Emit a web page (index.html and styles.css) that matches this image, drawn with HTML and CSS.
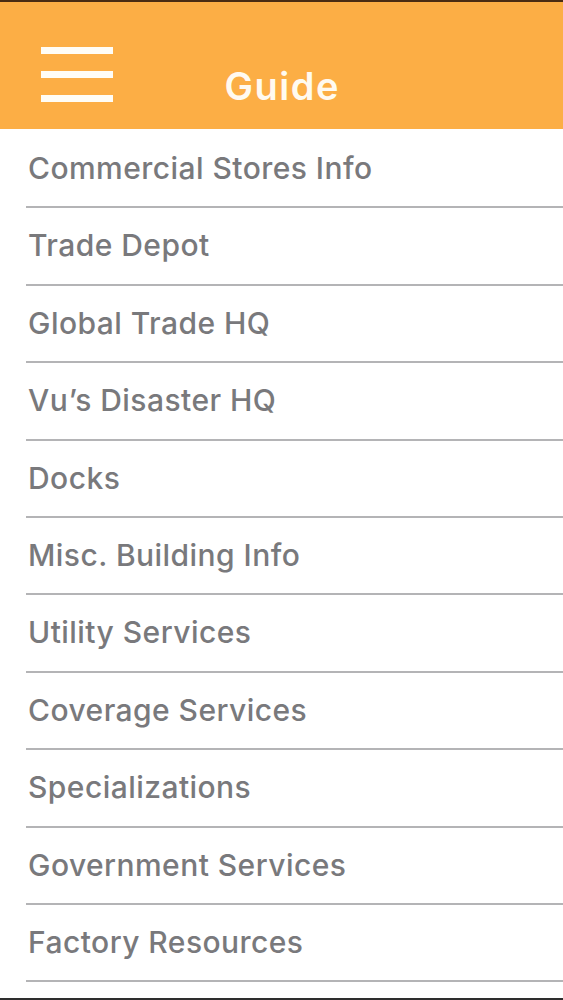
FILE: index.html
```html
<!DOCTYPE html>
<html lang="en">
<head>
<meta charset="utf-8">
<title>Guide</title>
<link rel="stylesheet" href="styles.css">
</head>
<body>
<div class="screen">
  <header class="topbar">
    <div class="menu-cell">
      <div class="hamburger" aria-label="Menu">
        <span class="bar"></span>
        <span class="bar"></span>
        <span class="bar"></span>
      </div>
    </div>
    <h1 class="title">Guide</h1>
    <div class="spacer"></div>
  </header>
  <ul class="list">
    <li class="row">Commercial Stores Info</li>
    <li class="row">Trade Depot</li>
    <li class="row">Global Trade HQ</li>
    <li class="row">Vu’s Disaster HQ</li>
    <li class="row">Docks</li>
    <li class="row">Misc. Building Info</li>
    <li class="row">Utility Services</li>
    <li class="row">Coverage Services</li>
    <li class="row">Specializations</li>
    <li class="row">Government Services</li>
    <li class="row">Factory Resources</li>
  </ul>
</div>
</body>
</html>
```
FILE: styles.css
```css
html, body {
  margin: 0;
  padding: 0;
  background: #ffffff;
}
.screen {
  width: 563px;
  height: 1000px;
  box-sizing: border-box;
  border-top: 2px solid #4a2c12;
  border-bottom: 2px solid #2e2e2e;
  display: flex;
  flex-direction: column;
  overflow: hidden;
  font-family: Inter, "Liberation Sans", sans-serif;
}
.topbar {
  height: 127px;
  flex: none;
  background: #fcae45;
  display: grid;
  grid-template-columns: 1fr auto 1fr;
  align-items: start;
}
.menu-cell {
  padding: 45px 0 0 41px;
}
.hamburger {
  width: 72px;
  display: flex;
  flex-direction: column;
  gap: 17px;
}
.bar {
  display: block;
  height: 7px;
  background: #fffdf6;
}
.title {
  margin: 0 -1.5px 0 0;
  padding-top: 64px;
  font-size: 38px;
  font-weight: 600;
  line-height: 40px;
  color: #fffaf0;
  letter-spacing: 1.5px;
}
.list {
  list-style: none;
  margin: 0;
  padding: 2px 0 0 26px;
}
.row {
  height: 75.4px;
  line-height: 75.4px;
  border-bottom: 2px solid #b4b4b6;
  padding-left: 2px;
  font-size: 30px;
  font-weight: 500;
  color: #79797c;
  letter-spacing: 0.45px;
  white-space: nowrap;
}
```
